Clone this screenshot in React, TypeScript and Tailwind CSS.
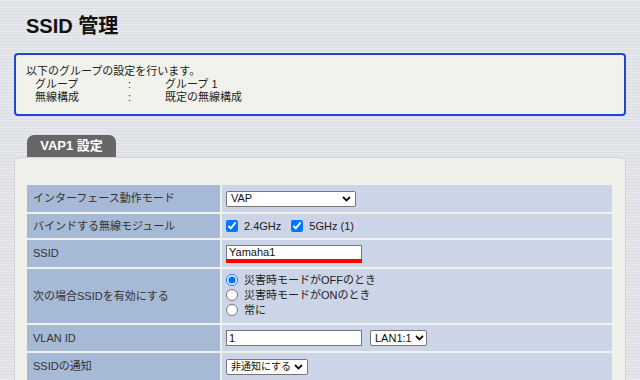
import React from 'react';

const font = "font-['Liberation_Sans','Noto_Sans_CJK_JP',sans-serif]";

function Chevron() {
  return (
    <svg width="9" height="6" viewBox="0 0 9 6" className="shrink-0">
      <path d="M1 1l3.5 3.5L8 1" fill="none" stroke="#111" strokeWidth="1.8" />
    </svg>
  );
}

function Select({ value, className, size = 'text-[11px]' }: { value: string; className: string; size?: string }) {
  return (
    <div className={`flex items-center justify-between gap-[3px] h-[16px] bg-white border border-[#767676] rounded-[2px] pl-[4px] pr-[4px] text-[#111] whitespace-nowrap overflow-hidden ${size} ${className}`}>
      <span className="leading-none">{value}</span>
      <Chevron />
    </div>
  );
}

function Row({ label, h, children }: { label: string; h: string; children: React.ReactNode }) {
  return (
    <>
      <div className={`${h} flex items-center bg-[#a6b9d5] pl-[6px] text-[11px] text-[#333]`}>{label}</div>
      <div className={`${h} flex items-center bg-[#ccd4e7] pl-[4px] text-[11px] text-[#222]`}>{children}</div>
    </>
  );
}

export default function App() {
  return (
    <div className={`${font} w-[640px] h-[380px] overflow-hidden bg-[repeating-linear-gradient(180deg,#e5e7eb_0px,#e5e7eb_2px,#dadde3_2px,#dadde3_3px)]`}>
      <h1 className="pl-[26px] pt-[14px] h-[53px] text-[20px] font-bold text-[#111] leading-[24px]">SSID 管理</h1>

      <div className="mx-[14px] h-[63px] border-2 border-[#1f46d6] rounded-[4px] bg-[#f2f2ec] pl-[10px] pt-[10px] text-[11px] leading-[13px] text-[#222]">
        <p>以下のグループの設定を行います。</p>
        <div className="flex pl-[9px]">
          <span className="w-[93px]">グループ</span>
          <span className="w-[37px]">:</span>
          <span>グループ 1</span>
        </div>
        <div className="flex pl-[9px]">
          <span className="w-[93px]">無線構成</span>
          <span className="w-[37px]">:</span>
          <span>既定の無線構成</span>
        </div>
      </div>

      <div className="mt-[19px] ml-[27px] w-[89px] h-[22px] rounded-t-[7px] bg-[#676767] flex items-center justify-center text-white font-bold text-[13px]">
        VAP1 設定
      </div>

      <div className="mx-[14px] h-[300px] bg-[#f1f1ec] border border-[#d2d2cc] rounded-[6px] pl-[12px] pr-[13px] pt-[27px]">
        <div className="grid grid-cols-[193px_1fr] gap-[2px]">
          <Row label="インターフェース動作モード" h="h-[27px]">
            <Select value="VAP" className="w-[130px]" />
          </Row>
          <Row label="バインドする無線モジュール" h="h-[24px]">
            <input type="checkbox" defaultChecked className="w-[12px] h-[12px] m-0 accent-[#0075ff]" />
            <span className="ml-[6px]">2.4GHz</span>
            <input type="checkbox" defaultChecked className="ml-[10px] w-[12px] h-[12px] m-0 accent-[#0075ff]" />
            <span className="ml-[6px]">5GHz (1)</span>
          </Row>
          <Row label="SSID" h="h-[27px]">
            <div className="w-[136px] flex flex-col">
              <div className="h-[14px] bg-white border border-[#767676] border-b-0 pl-[2px] leading-[13px] text-[11px] text-[#111]">Yamaha1</div>
              <div className="h-[4px] bg-[#ff0000]" />
            </div>
          </Row>
          <Row label="次の場合SSIDを有効にする" h="h-[54px]">
            <div className="flex flex-col gap-[3px] -mt-[2px] text-[11px] leading-[12px]">
              <label className="flex items-center gap-[6px]">
                <input type="radio" name="mode" defaultChecked className="w-[12px] h-[12px] m-0 accent-[#0075ff]" />
                災害時モードがOFFのとき
              </label>
              <label className="flex items-center gap-[6px]">
                <input type="radio" name="mode" className="w-[12px] h-[12px] m-0" />
                災害時モードがONのとき
              </label>
              <label className="flex items-center gap-[6px]">
                <input type="radio" name="mode" className="w-[12px] h-[12px] m-0" />
                常に
              </label>
            </div>
          </Row>
          <Row label="VLAN ID" h="h-[26px]">
            <div className="w-[136px] h-[16px] bg-white border border-[#767676] pl-[2px] leading-[14px] text-[11px] text-[#111]">1</div>
            <Select value="LAN1:1" className="ml-[8px] w-[57px]" />
          </Row>
          <Row label="SSIDの通知" h="h-[27px]">
            <Select value="非通知にする" className="w-[82px]" size="text-[10px]" />
          </Row>
        </div>
      </div>
    </div>
  );
}
